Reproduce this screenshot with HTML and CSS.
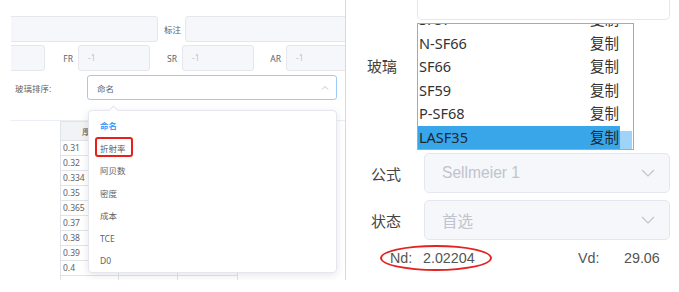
FILE: index.html
```html
<!DOCTYPE html>
<html lang="zh">
<head>
    <meta charset="UTF-8">
    <title>玻璃排序</title>
    <link rel="stylesheet" href="styles.css">
</head>
<body>
    <div class="shot">
        <div class="left">
            <div class="clip">
                <div class="row">
                    <div class="inp inp-a"></div>
                    <span class="lbl lbl-note">标注</span>
                    <div class="inp inp-b"></div>
                </div>
                <div class="row">
                    <div class="inp inp-c"></div>
                    <span class="lbl lbl-first">FR</span>
                    <div class="inp inp-d">-1</div>
                    <span class="lbl">SR</span>
                    <div class="inp inp-d">-1</div>
                    <span class="lbl">AR</span>
                    <div class="inp inp-d">-1</div>
                </div>
                <div class="row row-sort">
                    <span class="sort-lbl">玻璃排序:</span>
                    <div class="sort-select">
                        <span>命名</span>
                        <svg width="8" height="5" viewBox="0 0 8 5"><polyline points="1,4.5 4,1.5 7,4.5" fill="none" stroke="#c0c4cc" stroke-width="1"/></svg>
                    </div>
                </div>
                <div class="divider"></div>
                <table class="grid">
                    <tr><th>厚度</th><th></th><th></th></tr>
                    <tr><td>0.31</td><td></td><td></td></tr>
                    <tr><td>0.32</td><td></td><td></td></tr>
                    <tr><td>0.334</td><td></td><td></td></tr>
                    <tr><td>0.35</td><td></td><td></td></tr>
                    <tr><td>0.365</td><td></td><td></td></tr>
                    <tr><td>0.37</td><td></td><td></td></tr>
                    <tr><td>0.38</td><td></td><td></td></tr>
                    <tr><td>0.39</td><td></td><td></td></tr>
                    <tr><td>0.4</td><td></td><td></td></tr>
                    <tr><td>&nbsp;</td><td></td><td></td></tr>
                </table>
            </div>
            <div class="popper">
                <div class="popper-arrow"></div>
                <div class="opt active">命名</div>
                <div class="opt">折射率</div>
                <div class="opt">阿贝数</div>
                <div class="opt">密度</div>
                <div class="opt">成本</div>
                <div class="opt">TCE</div>
                <div class="opt">D0</div>
                <div class="mark-box"></div>
            </div>
        </div>
        <div class="right">
            <div class="top-input"></div>
            <div class="glass-row">
                <span class="glass-lbl">玻璃</span>
                <div class="listbox">
                    <div class="items">
                        <div class="item"><span>SF57</span><span>复制</span></div>
                        <div class="item"><span>N-SF66</span><span>复制</span></div>
                        <div class="item"><span>SF66</span><span>复制</span></div>
                        <div class="item"><span>SF59</span><span>复制</span></div>
                        <div class="item"><span>P-SF68</span><span>复制</span></div>
                        <div class="item selected"><span>LASF35</span><span>复制</span></div>
                    </div>
                    <div class="scroll"><div class="thumb"></div></div>
                </div>
            </div>
            <div class="field">
                <span class="field-lbl">公式</span>
                <div class="field-select">
                    <span class="ph-latin">Sellmeier 1</span>
                    <svg width="14" height="8" viewBox="0 0 14 8"><polyline points="1,1 7,7 13,1" fill="none" stroke="#c0c4cc" stroke-width="1.2"/></svg>
                </div>
            </div>
            <div class="field field-state">
                <span class="field-lbl">状态</span>
                <div class="field-select">
                    <span class="ph-cjk">首选</span>
                    <svg width="14" height="8" viewBox="0 0 14 8"><polyline points="1,1 7,7 13,1" fill="none" stroke="#c0c4cc" stroke-width="1.2"/></svg>
                </div>
            </div>
            <div class="values">
                <span class="nd-lbl">Nd:</span>
                <span class="nd-val">2.02204</span>
                <span class="vd-lbl">Vd:</span>
                <span class="vd-val">29.06</span>
                <div class="ring"></div>
            </div>
        </div>
    </div>
</body>
</html>
```

FILE: styles.css
```css
body {
    margin: 0;
    background: #fff;
    font-family: "Noto Sans", "Noto Sans CJK SC", sans-serif;
}

.shot {
    display: flex;
    height: 280px;
}

/* left screenshot */
.left {
    position: relative;
    width: 345px;
    flex-shrink: 0;
}

.clip {
    margin-left: 11px;
    width: 334px;
    height: 280px;
    overflow: hidden;
    padding-top: 16px;
    box-sizing: border-box;
    font-size: 8.5px;
    color: #606266;
}

.row {
    display: flex;
    align-items: center;
    height: 26px;
    margin-bottom: 3px;
}

.inp {
    flex-shrink: 0;
    height: 26px;
    box-sizing: border-box;
    background: #f5f7fa;
    border: 1px solid #e4e7ed;
    border-radius: 3px;
    color: #c0c4cc;
    padding-left: 9px;
    line-height: 24px;
}

.inp-a { width: 157px; margin-left: -10px; }
.inp-b { width: 200px; }
.inp-c { width: 44px; margin-left: -10px; }
.inp-d { width: 72px; }

.lbl {
    flex-shrink: 0;
    width: 32px;
    text-align: right;
    padding-right: 5px;
    box-sizing: border-box;
}

.lbl.lbl-first { width: 33px; }
.lbl.lbl-note { width: 27px; padding-right: 4px; }

.row-sort {
    height: 25px;
    margin-top: 4px;
    margin-bottom: 0;
}

.sort-lbl {
    width: 76px;
    padding-left: 4px;
    box-sizing: border-box;
    flex-shrink: 0;
}

.sort-select {
    width: 250px;
    height: 25px;
    flex-shrink: 0;
    box-sizing: border-box;
    border: 1px solid #9ccbfb;
    border-radius: 3px;
    display: flex;
    align-items: center;
    justify-content: space-between;
    padding: 0 7px 0 9px;
}

.divider {
    height: 1px;
    background: #ebeef5;
    margin-top: 20px;
}

.grid {
    margin-left: 49px;
    border-collapse: collapse;
    table-layout: fixed;
}

.grid th, .grid td {
    border: 1px solid #e0e3ea;
    padding: 0 0 0 2px;
    font-weight: normal;
    text-align: left;
    white-space: nowrap;
}

.grid th {
    background: #f2f3f5;
    height: 18px;
    text-align: center;
    color: #555;
}

.grid td { height: 14px; line-height: 14px; }
.grid tr > :nth-child(1) { width: 55px; }
.grid tr > :nth-child(2) { width: 56px; }
.grid tr > :nth-child(3) { width: 57px; }

.popper {
    position: absolute;
    left: 88px;
    top: 110px;
    width: 249px;
    height: 163px;
    box-sizing: border-box;
    padding-top: 4px;
    background: #fff;
    border: 1px solid #e4e7ed;
    border-radius: 4px;
    box-shadow: 0 2px 8px rgba(0, 0, 0, 0.1);
    font-size: 8.5px;
    color: #606266;
}

.popper-arrow {
    position: absolute;
    left: 21px;
    top: -4px;
    width: 6px;
    height: 6px;
    background: #fff;
    border-left: 1px solid #e4e7ed;
    border-top: 1px solid #e4e7ed;
    transform: rotate(45deg);
}

.opt {
    height: 22.5px;
    line-height: 22.5px;
    padding-left: 11px;
}

.opt.active {
    color: #409eff;
    font-weight: bold;
}

.mark-box {
    position: absolute;
    left: 6px;
    top: 26px;
    width: 38px;
    height: 20px;
    box-sizing: border-box;
    border: 2px solid #e8201c;
    border-radius: 3px;
}

/* right screenshot */
.right {
    flex: 1;
    border-left: 1px solid #d9d9d9;
    position: relative;
    color: #333;
}

.top-input {
    margin-left: 71px;
    width: 253px;
    height: 20px;
    box-sizing: border-box;
    border: 1px solid #e4e7ed;
    border-top: none;
    border-radius: 0 0 5px 5px;
}

.glass-row {
    display: flex;
    margin-top: 3px;
}

.glass-lbl {
    width: 50px;
    padding-left: 21px;
    margin-top: 32px;
    font-size: 15px;
    line-height: 22px;
    color: #444;
}

.listbox {
    display: flex;
    width: 217px;
    height: 127px;
    box-sizing: border-box;
    border: 1px solid #a9a9a9;
    overflow: hidden;
}

.items {
    width: 202px;
    margin-top: -16px;
    font-size: 14.5px;
}

.item {
    display: flex;
    justify-content: space-between;
    height: 23.5px;
    line-height: 23.5px;
    padding: 0 1px 0 1px;
}

.item.selected {
    background: #3aa6ea;
    color: #1d2733;
}

.scroll {
    width: 13px;
    display: flex;
    align-items: flex-end;
}

.thumb {
    width: 12px;
    height: 18px;
    background: #9fd4f8;
}

.field {
    display: flex;
    align-items: center;
    margin-top: 3px;
}

.field-state { margin-top: 7px; }

.field-lbl {
    width: 78px;
    padding-left: 25px;
    box-sizing: border-box;
    font-size: 15px;
    color: #444;
}

.field-select {
    width: 246px;
    height: 40px;
    box-sizing: border-box;
    background: #f5f7fa;
    border: 1px solid #e4e7ed;
    border-radius: 5px;
    display: flex;
    align-items: center;
    justify-content: space-between;
    padding: 0 14px 0 17px;
    color: #c0c4cc;
}

.ph-latin {
    font-family: "Liberation Sans", Arial, sans-serif;
    font-size: 15.6px;
}

.ph-cjk { font-size: 15.5px; }

.values {
    position: relative;
    display: flex;
    align-items: center;
    height: 18px;
    margin-top: 9px;
    font-family: "Liberation Sans", Arial, sans-serif;
    font-size: 14.3px;
    color: #555;
}

.nd-lbl { margin-left: 44px; width: 33px; }
.nd-val { width: 155px; }
.vd-lbl { width: 46px; }

.ring {
    position: absolute;
    left: 34px;
    top: -4px;
    width: 112px;
    height: 26px;
    box-sizing: border-box;
    border: 2px solid #e52222;
    border-radius: 50%;
}
```
